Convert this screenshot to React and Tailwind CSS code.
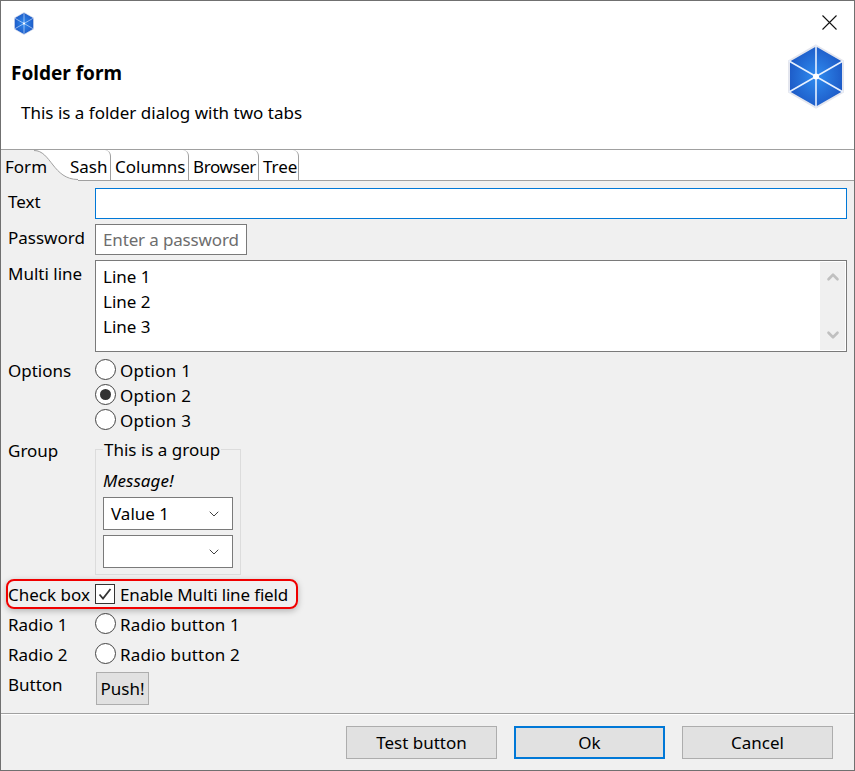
import { ChevronDown, ChevronUp } from "lucide-react";

function HexLogo({ className, id }) {
  return (
    <svg className={className} viewBox="0 0 56 64">
      <defs>
        <radialGradient id={id} cx="50%" cy="50%" r="55%">
          <stop offset="0%" stopColor="#2f8cf0" />
          <stop offset="100%" stopColor="#1c57c4" />
        </radialGradient>
      </defs>
      <polygon points="28,1 55,16.5 55,47.5 28,63 1,47.5 1,16.5" fill={`url(#${id})`} stroke="#e4e6ee" strokeWidth="2" />
      <path d="M28 1V63M1 16.5L55 47.5M55 16.5L1 47.5" stroke="#e8f1ff" strokeWidth="1.6" />
      <circle cx="28" cy="32" r="3" fill="#fff" />
    </svg>
  );
}

function Radio({ checked, label, className = "" }) {
  return (
    <div className="flex items-center h-[25px]">
      <div className="w-[21px] h-[21px] -mt-[1px] rounded-full border border-[#444] bg-white flex items-center justify-center shrink-0">
        {checked && <div className="w-[11px] h-[11px] rounded-full bg-[#333]" />}
      </div>
      <span className={`ml-[4px] pt-[2px] ${className}`}>{label}</span>
    </div>
  );
}

function Row({ label, children, className = "" }) {
  return (
    <div className={`flex ${className}`}>
      <div className="w-[87px] shrink-0 h-[25px] mt-[1px] leading-[25px]">{label}</div>
      <div className="flex-1 min-w-0">{children}</div>
    </div>
  );
}

function Combo({ value }) {
  return (
    <div className="w-[130px] h-[33px] border border-[#7a7a7a] bg-white flex items-center justify-between pl-[7px] pr-[10px]">
      <span>{value}</span>
      <ChevronDown size={16} strokeWidth={1.4} className="text-[#333]" />
    </div>
  );
}

function Tab({ label, className }) {
  return (
    <div className={`relative h-[30px] px-[4px] leading-[34px] border-r border-[#a0a0a0] rounded-tr-[6px] ${className}`}>
      {label}
    </div>
  );
}

function FooterButton({ label, primary }) {
  return (
    <button className={`w-[151px] h-[33px] bg-[#e1e1e1] ${primary ? "border-2 border-[#0078d7]" : "border border-[#adadad]"}`}>
      {label}
    </button>
  );
}

export default function App() {
  return (
    <div className="relative w-[855px] h-[771px] border border-[#707070] bg-[#f0f0f0] text-black text-[17px] font-['Noto_Sans',sans-serif] overflow-hidden flex flex-col">
      {/* Header */}
      <div className="relative h-[149px] bg-white border-b border-[#a0a0a0] shrink-0">
        <div className="flex justify-between pl-[13px] pr-[17px] pt-[11px]">
          <HexLogo id="logoSmall" className="w-[20px] h-[23px]" />
          <svg className="w-[15px] h-[15px] mt-[3px]" viewBox="0 0 15 15">
            <path d="M0.5 0.5L14.5 14.5M14.5 0.5L0.5 14.5" stroke="#111" strokeWidth="1.1" />
          </svg>
        </div>
        <div className="flex justify-between pl-[10px] pr-[10px] -mt-[1px]">
          <div>
            <div className="font-bold text-[19px] mt-[27px] leading-[25px]">Folder form</div>
            <div className="ml-[10px] mt-[14px] leading-[25px]">This is a folder dialog with two tabs</div>
          </div>
          <HexLogo id="logoBig" className="w-[56px] h-[65px] mt-[10px]" />
        </div>
      </div>

      {/* Tabs */}
      <div className="flex h-[31px] shrink-0 bg-white border-b border-[#a0a0a0]">
        <div className="relative w-[65px] h-[31px] pl-[4px] leading-[34px] shrink-0">
          <svg className="absolute left-0 top-0 w-[78px] h-[31px]" viewBox="0 0 78 31">
            <path d="M0 0H33C50 0 52 30 77 30V31H0Z" fill="#f0f0f0" />
            <path d="M33 0.5C50 0.5 52 29.5 77 29.5" fill="none" stroke="#a0a0a0" />
          </svg>
          <span className="relative">Form</span>
        </div>
        <Tab label="Sash" className="w-[45px] relative z-10" />
        <Tab label="Columns" className="w-[78px]" />
        <Tab label="Browser" className="w-[70px] tracking-[-0.4px]" />
        <Tab label="Tree" className="w-[40px]" />
      </div>

      {/* Form */}
      <div className="flex-1 flex flex-col pl-[7px] pr-[7px] pt-[7px]">
        <Row label="Text">
          <div className="h-[31px] border border-[#0078d7] bg-white" />
        </Row>
        <Row label="Password" className="mt-[5px]">
          <div className="w-[152px] h-[31px] border border-[#7a7a7a] bg-white pl-[7px] leading-[29px] text-[#6d6d6d] tracking-[-0.15px]">Enter a password</div>
        </Row>
        <Row label="Multi line" className="mt-[5px]">
          <div className="h-[92px] border border-[#7a7a7a] bg-white flex justify-between p-[1px]">
            <div className="pl-[6px] pt-[2px] leading-[25px]">
              <div>Line 1</div>
              <div>Line 2</div>
              <div>Line 3</div>
            </div>
            <div className="w-[25px] bg-[#f0f0f0] flex flex-col justify-between items-center py-[6px]">
              <ChevronUp size={18} strokeWidth={3.5} className="text-[#c0c0c0]" />
              <ChevronDown size={18} strokeWidth={3.5} className="text-[#c0c0c0]" />
            </div>
          </div>
        </Row>
        <Row label="Options" className="mt-[5px]">
          <Radio label="Option 1" className="tracking-[0.25px]" />
          <Radio checked label="Option 2" className="tracking-[0.25px]" />
          <Radio label="Option 3" className="tracking-[0.25px]" />
        </Row>
        <Row label="Group" className="mt-[5px]">
          <fieldset className="w-[146px] h-[138px] border border-[#dcdcdc] pl-[7px] pr-[7px]">
            <legend className="h-[25px] leading-[25px] px-[1px]">This is a group</legend>
            <div className="italic h-[25px] leading-[25px] mt-[6px] mb-[4px] tracking-[0.1px]">Message!</div>
            <Combo value="Value 1" />
            <div className="mt-[5px]">
              <Combo value="" />
            </div>
          </fieldset>
        </Row>
        <Row label="Check box" className="mt-[6px]">
          <div className="flex items-center h-[25px]">
            <div className="w-[20px] h-[20px] border border-[#333] bg-white flex items-center justify-center">
              <svg className="w-[16px] h-[16px]" viewBox="0 0 16 16">
                <path d="M2.5 8.5L6 12.5L13.5 3" fill="none" stroke="#333" strokeWidth="1.8" />
              </svg>
            </div>
            <span className="ml-[5px] pt-[2px] tracking-[-0.15px]">Enable Multi line field</span>
          </div>
        </Row>
        <Row label="Radio 1" className="mt-[4px]">
          <Radio label="Radio button 1" className="tracking-[0.15px]" />
        </Row>
        <Row label="Radio 2" className="mt-[4px]">
          <Radio label="Radio button 2" className="tracking-[0.15px]" />
        </Row>
        <Row label="Button" className="mt-[4px]">
          <button className="w-[53px] h-[33px] mt-[1px] bg-[#e1e1e1] border border-[#adadad] ml-[1px]">Push!</button>
        </Row>
      </div>

      {/* Footer */}
      <div className="h-[57px] shrink-0 border-t border-[#a0a0a0] shadow-[inset_0_1px_0_#ffffff] flex justify-end items-start gap-[17px] pt-[12px] pr-[21px]">
        <FooterButton label="Test button" />
        <FooterButton label="Ok" primary />
        <FooterButton label="Cancel" />
      </div>

      {/* Red highlight drawn over the check box row */}
      <div className="absolute left-[5px] top-[578px] w-[292px] h-[30px] rounded-[8px] border-2 border-[#f00000] shadow-[0_2px_6px_rgba(0,0,0,0.25)] pointer-events-none" />
    </div>
  );
}
